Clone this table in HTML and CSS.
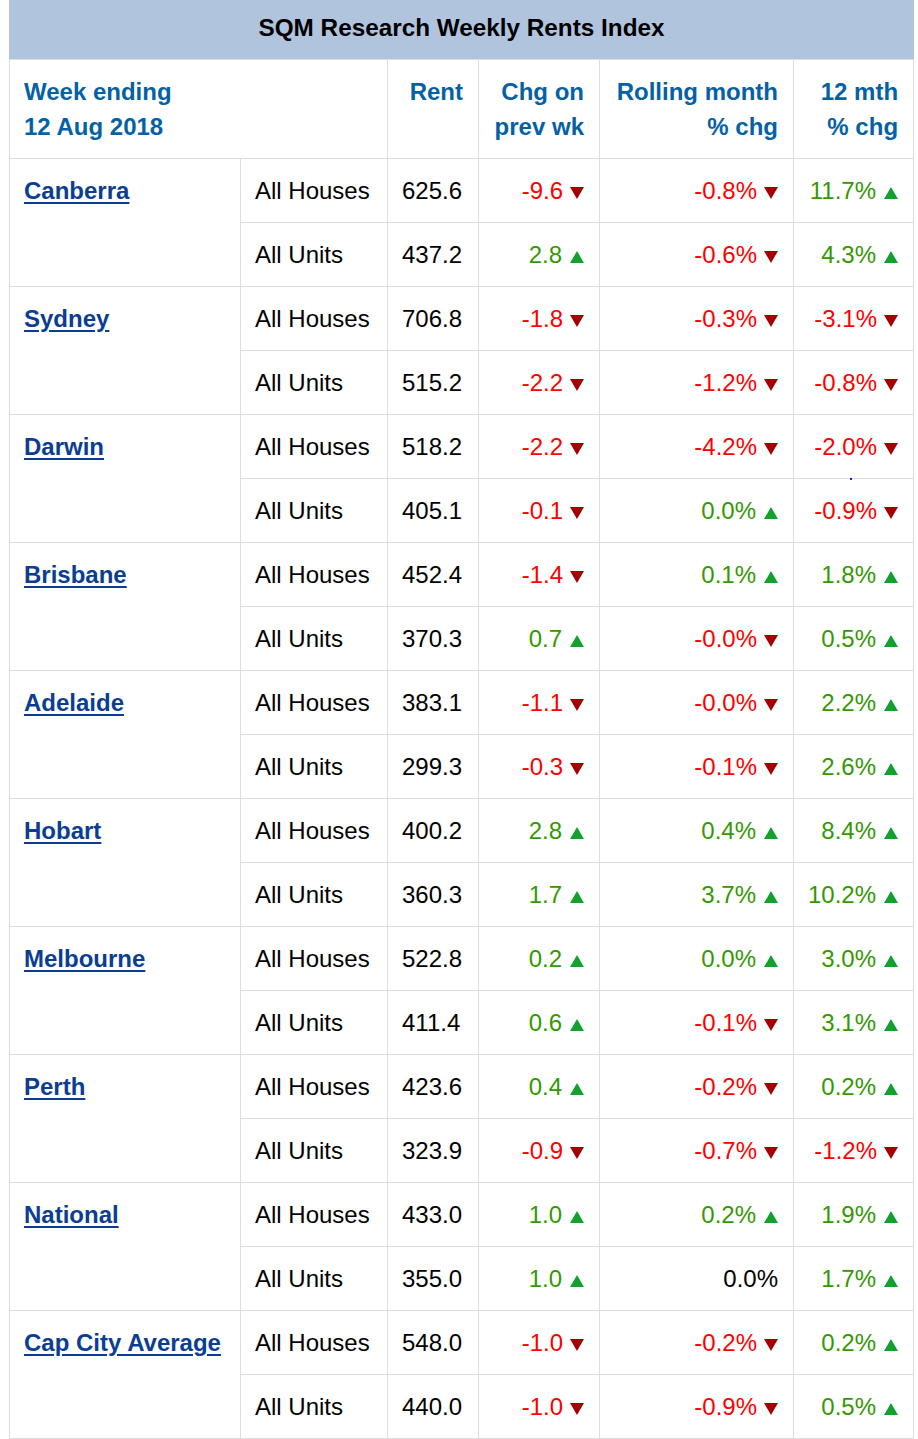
FILE: index.html
```html
<!DOCTYPE html>
<html>
<head>
<meta charset="utf-8">
<title>SQM Research Weekly Rents Index</title>
<link rel="stylesheet" href="styles.css">
</head>
<body>
<table class="rents">
  <colgroup>
    <col class="c-city"><col class="c-type"><col class="c-rent"><col class="c-wk"><col class="c-month"><col class="c-year">
  </colgroup>
  <thead>
    <tr><th colspan="6" class="title">SQM Research Weekly Rents Index</th></tr>
    <tr class="heads">
      <th colspan="2" class="left">Week ending<br>12 Aug 2018</th>
      <th>Rent</th>
      <th>Chg on<br>prev wk</th>
      <th>Rolling month<br>% chg</th>
      <th>12 mth<br>% chg</th>
    </tr>
  </thead>
  <tbody>
    <tr><td rowspan="2" class="city"><a href="#">Canberra</a></td><td>All Houses</td><td class="rent">625.6</td><td class="num neg">-9.6<i class="dn"></i></td><td class="num neg">-0.8%<i class="dn"></i></td><td class="num pos">11.7%<i class="up"></i></td></tr>
    <tr><td>All Units</td><td class="rent">437.2</td><td class="num pos">2.8<i class="up"></i></td><td class="num neg">-0.6%<i class="dn"></i></td><td class="num pos">4.3%<i class="up"></i></td></tr>

    <tr><td rowspan="2" class="city"><a href="#">Sydney</a></td><td>All Houses</td><td class="rent">706.8</td><td class="num neg">-1.8<i class="dn"></i></td><td class="num neg">-0.3%<i class="dn"></i></td><td class="num neg">-3.1%<i class="dn"></i></td></tr>
    <tr><td>All Units</td><td class="rent">515.2</td><td class="num neg">-2.2<i class="dn"></i></td><td class="num neg">-1.2%<i class="dn"></i></td><td class="num neg">-0.8%<i class="dn"></i></td></tr>

    <tr><td rowspan="2" class="city"><a href="#">Darwin</a></td><td>All Houses</td><td class="rent">518.2</td><td class="num neg">-2.2<i class="dn"></i></td><td class="num neg">-4.2%<i class="dn"></i></td><td class="num neg">-2.0%<i class="dn"></i></td></tr>
    <tr><td>All Units</td><td class="rent">405.1</td><td class="num neg">-0.1<i class="dn"></i></td><td class="num pos">0.0%<i class="up"></i></td><td class="num neg dotted">-0.9%<i class="dn"></i><span class="speck"></span></td></tr>

    <tr><td rowspan="2" class="city"><a href="#">Brisbane</a></td><td>All Houses</td><td class="rent">452.4</td><td class="num neg">-1.4<i class="dn"></i></td><td class="num pos">0.1%<i class="up"></i></td><td class="num pos">1.8%<i class="up"></i></td></tr>
    <tr><td>All Units</td><td class="rent">370.3</td><td class="num pos">0.7<i class="up"></i></td><td class="num neg">-0.0%<i class="dn"></i></td><td class="num pos">0.5%<i class="up"></i></td></tr>

    <tr><td rowspan="2" class="city"><a href="#">Adelaide</a></td><td>All Houses</td><td class="rent">383.1</td><td class="num neg">-1.1<i class="dn"></i></td><td class="num neg">-0.0%<i class="dn"></i></td><td class="num pos">2.2%<i class="up"></i></td></tr>
    <tr><td>All Units</td><td class="rent">299.3</td><td class="num neg">-0.3<i class="dn"></i></td><td class="num neg">-0.1%<i class="dn"></i></td><td class="num pos">2.6%<i class="up"></i></td></tr>

    <tr><td rowspan="2" class="city"><a href="#">Hobart</a></td><td>All Houses</td><td class="rent">400.2</td><td class="num pos">2.8<i class="up"></i></td><td class="num pos">0.4%<i class="up"></i></td><td class="num pos">8.4%<i class="up"></i></td></tr>
    <tr><td>All Units</td><td class="rent">360.3</td><td class="num pos">1.7<i class="up"></i></td><td class="num pos">3.7%<i class="up"></i></td><td class="num pos">10.2%<i class="up"></i></td></tr>

    <tr><td rowspan="2" class="city"><a href="#">Melbourne</a></td><td>All Houses</td><td class="rent">522.8</td><td class="num pos">0.2<i class="up"></i></td><td class="num pos">0.0%<i class="up"></i></td><td class="num pos">3.0%<i class="up"></i></td></tr>
    <tr><td>All Units</td><td class="rent">411.4</td><td class="num pos">0.6<i class="up"></i></td><td class="num neg">-0.1%<i class="dn"></i></td><td class="num pos">3.1%<i class="up"></i></td></tr>

    <tr><td rowspan="2" class="city"><a href="#">Perth</a></td><td>All Houses</td><td class="rent">423.6</td><td class="num pos">0.4<i class="up"></i></td><td class="num neg">-0.2%<i class="dn"></i></td><td class="num pos">0.2%<i class="up"></i></td></tr>
    <tr><td>All Units</td><td class="rent">323.9</td><td class="num neg">-0.9<i class="dn"></i></td><td class="num neg">-0.7%<i class="dn"></i></td><td class="num neg">-1.2%<i class="dn"></i></td></tr>

    <tr><td rowspan="2" class="city"><a href="#">National</a></td><td>All Houses</td><td class="rent">433.0</td><td class="num pos">1.0<i class="up"></i></td><td class="num pos">0.2%<i class="up"></i></td><td class="num pos">1.9%<i class="up"></i></td></tr>
    <tr><td>All Units</td><td class="rent">355.0</td><td class="num pos">1.0<i class="up"></i></td><td class="num">0.0%</td><td class="num pos">1.7%<i class="up"></i></td></tr>

    <tr><td rowspan="2" class="city"><a href="#">Cap City Average</a></td><td>All Houses</td><td class="rent">548.0</td><td class="num neg">-1.0<i class="dn"></i></td><td class="num neg">-0.2%<i class="dn"></i></td><td class="num pos">0.2%<i class="up"></i></td></tr>
    <tr><td>All Units</td><td class="rent">440.0</td><td class="num neg">-1.0<i class="dn"></i></td><td class="num neg">-0.9%<i class="dn"></i></td><td class="num pos">0.5%<i class="up"></i></td></tr>
  </tbody>
</table>
</body>
</html>
```
FILE: styles.css
```css
html, body {
  margin: 0;
  padding: 0;
  background: #ffffff;
}
body {
  font-family: "Liberation Sans", Arial, sans-serif;
  color: #000;
}
.rents {
  margin-left: 9px;
  width: 904px;
  border-collapse: collapse;
  table-layout: fixed;
  font-size: 24px;
}
.c-city { width: 231px; }
.c-type { width: 147px; }
.c-rent { width: 91px; }
.c-wk { width: 121px; }
.c-month { width: 194px; }
.c-year { width: 120px; }

.rents th, .rents td {
  border: 1px solid #dddddd;
  padding: 14px 15px 14px 14px;
  line-height: 35px;
  vertical-align: top;
  white-space: nowrap;
}
.rents th.title {
  background: #b0c4de;
  border-color: #b0c4de;
  border-bottom-color: #dddddd;
  color: #000;
  font-size: 24.3px;
  font-weight: bold;
  text-align: center;
  padding: 9px 15px 14px;
  line-height: 35px;
}
.heads th {
  color: #0561a6;
  font-weight: bold;
  text-align: right;
  font-size: 24px;
  padding-top: 14px;
  padding-bottom: 14px;
}
.heads th.left { text-align: left; }
.city a {
  color: #0b3e92;
  font-weight: bold;
  text-decoration: underline;
  text-decoration-thickness: 2px;
  text-underline-offset: 3px;
}
.rent { text-align: left; }
.num { text-align: right; }
.neg { color: #ff0000; }
.pos { color: #339900; }
.dotted { position: relative; }
.speck {
  position: absolute;
  left: 56px;
  top: -1px;
  width: 2px;
  height: 2px;
  background: #1a1aff;
}
i.up, i.dn {
  display: inline-block;
  width: 0;
  height: 0;
  margin-left: 7px;
  border-left: 7px solid transparent;
  border-right: 7px solid transparent;
  vertical-align: 0;
}
i.dn {
  border-top: 12px solid #a30000;
}
i.up {
  margin-left: 8px;
  border-bottom: 12px solid #11a32e;
}
```
